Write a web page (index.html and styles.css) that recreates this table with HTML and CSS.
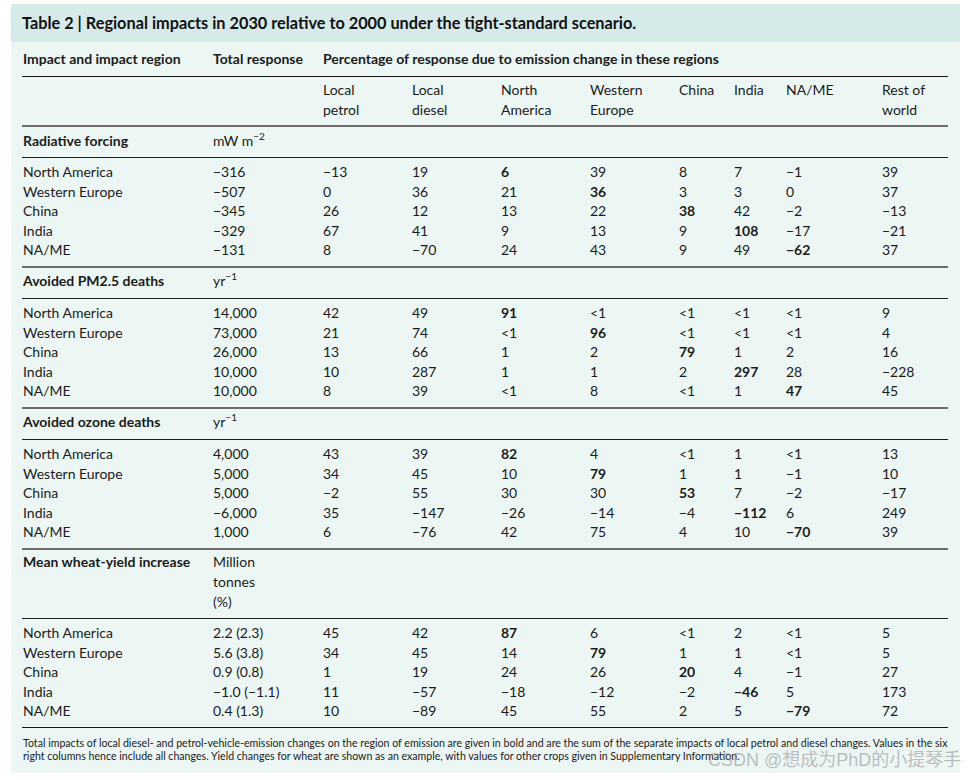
FILE: index.html
```html
<!DOCTYPE html>
<html lang="en">
<head>
<meta charset="utf-8">
<title>Table 2</title>
<link rel="stylesheet" href="styles.css">
</head>
<body>
<div class="panel">
  <div class="title">Table 2 | Regional impacts in 2030 relative to 2000 under the tight-standard scenario.</div>
  <div class="body">
    <table class="tbl">
      <colgroup>
        <col class="c1"><col class="c2"><col class="c3"><col class="c4"><col class="c5"><col class="c6"><col class="c7"><col class="c8"><col class="c9"><col class="c10">
      </colgroup>
      <thead>
        <tr class="hrow1">
          <th>Impact and impact region</th>
          <th>Total response</th>
          <th colspan="8">Percentage of response due to emission change in these regions</th>
        </tr>
        <tr class="hrow2">
          <th></th><th></th>
          <th>Local<br>petrol</th>
          <th>Local<br>diesel</th>
          <th>North<br>America</th>
          <th>Western<br>Europe</th>
          <th>China</th>
          <th>India</th>
          <th>NA/ME</th>
          <th>Rest of<br>world</th>
        </tr>
      </thead>
      <tbody>
        <tr class="sec"><td class="lab">Radiative forcing</td><td>mW m<sup>−2</sup></td><td colspan="8"></td></tr>
        <tr class="first"><td>North America</td><td>−316</td><td>−13</td><td>19</td><td class="b">6</td><td>39</td><td>8</td><td>7</td><td>−1</td><td>39</td></tr>
        <tr><td>Western Europe</td><td>−507</td><td>0</td><td>36</td><td>21</td><td class="b">36</td><td>3</td><td>3</td><td>0</td><td>37</td></tr>
        <tr><td>China</td><td>−345</td><td>26</td><td>12</td><td>13</td><td>22</td><td class="b">38</td><td>42</td><td>−2</td><td>−13</td></tr>
        <tr><td>India</td><td>−329</td><td>67</td><td>41</td><td>9</td><td>13</td><td>9</td><td class="b">108</td><td>−17</td><td>−21</td></tr>
        <tr class="last"><td>NA/ME</td><td>−131</td><td>8</td><td>−70</td><td>24</td><td>43</td><td>9</td><td>49</td><td class="b">−62</td><td>37</td></tr>

        <tr class="sec up"><td class="lab">Avoided PM2.5 deaths</td><td>yr<sup>−1</sup></td><td colspan="8"></td></tr>
        <tr class="first"><td>North America</td><td>14,000</td><td>42</td><td>49</td><td class="b">91</td><td>&lt;1</td><td>&lt;1</td><td>&lt;1</td><td>&lt;1</td><td>9</td></tr>
        <tr><td>Western Europe</td><td>73,000</td><td>21</td><td>74</td><td>&lt;1</td><td class="b">96</td><td>&lt;1</td><td>&lt;1</td><td>&lt;1</td><td>4</td></tr>
        <tr><td>China</td><td>26,000</td><td>13</td><td>66</td><td>1</td><td>2</td><td class="b">79</td><td>1</td><td>2</td><td>16</td></tr>
        <tr><td>India</td><td>10,000</td><td>10</td><td>287</td><td>1</td><td>1</td><td>2</td><td class="b">297</td><td>28</td><td>−228</td></tr>
        <tr class="last"><td>NA/ME</td><td>10,000</td><td>8</td><td>39</td><td>&lt;1</td><td>8</td><td>&lt;1</td><td>1</td><td class="b">47</td><td>45</td></tr>

        <tr class="sec up"><td class="lab">Avoided ozone deaths</td><td>yr<sup>−1</sup></td><td colspan="8"></td></tr>
        <tr class="first"><td>North America</td><td>4,000</td><td>43</td><td>39</td><td class="b">82</td><td>4</td><td>&lt;1</td><td>1</td><td>&lt;1</td><td>13</td></tr>
        <tr><td>Western Europe</td><td>5,000</td><td>34</td><td>45</td><td>10</td><td class="b">79</td><td>1</td><td>1</td><td>−1</td><td>10</td></tr>
        <tr><td>China</td><td>5,000</td><td>−2</td><td>55</td><td>30</td><td>30</td><td class="b">53</td><td>7</td><td>−2</td><td>−17</td></tr>
        <tr><td>India</td><td>−6,000</td><td>35</td><td>−147</td><td>−26</td><td>−14</td><td>−4</td><td class="b">−112</td><td>6</td><td>249</td></tr>
        <tr class="last"><td>NA/ME</td><td>1,000</td><td>6</td><td>−76</td><td>42</td><td>75</td><td>4</td><td>10</td><td class="b">−70</td><td>39</td></tr>

        <tr class="sec tall"><td class="lab">Mean wheat-yield increase</td><td>Million<br>tonnes<br>(%)</td><td colspan="8"></td></tr>
        <tr class="first"><td>North America</td><td>2.2 (2.3)</td><td>45</td><td>42</td><td class="b">87</td><td>6</td><td>&lt;1</td><td>2</td><td>&lt;1</td><td>5</td></tr>
        <tr><td>Western Europe</td><td>5.6 (3.8)</td><td>34</td><td>45</td><td>14</td><td class="b">79</td><td>1</td><td>1</td><td>&lt;1</td><td>5</td></tr>
        <tr><td>China</td><td>0.9 (0.8)</td><td>1</td><td>19</td><td>24</td><td>26</td><td class="b">20</td><td>4</td><td>−1</td><td>27</td></tr>
        <tr><td>India</td><td>−1.0 (−1.1)</td><td>11</td><td>−57</td><td>−18</td><td>−12</td><td>−2</td><td class="b">−46</td><td>5</td><td>173</td></tr>
        <tr class="last end"><td>NA/ME</td><td>0.4 (1.3)</td><td>10</td><td>−89</td><td>45</td><td>55</td><td>2</td><td>5</td><td class="b">−79</td><td>72</td></tr>
      </tbody>
    </table>
    <p class="note">Total impacts of local diesel- and petrol-vehicle-emission changes on the region of emission are given in bold and are the sum of the separate impacts of local petrol and diesel changes. Values in the six right columns hence include all changes. Yield changes for wheat are shown as an example, with values for other crops given in Supplementary Information.</p>
  </div>
</div>
<div class="watermark">CSDN @想成为PhD的小提琴手</div>
</body>
</html>
```

FILE: styles.css
```css
html, body {
  margin: 0;
  padding: 0;
  background: #ffffff;
}
body {
  font-family: Lato, "Open Sans", "Noto Sans", sans-serif;
  color: #1b1b1b;
  position: relative;
  width: 970px;
  height: 780px;
  overflow: hidden;
}
.panel {
  margin: 4px 10px 0 11px;
  width: 949px;
  background: #ecf6f5;
}
.title {
  background: #d7eaea;
  height: 38px;
  line-height: 34px;
  padding-left: 11px;
  font-weight: 700;
  font-size: 16.3px;
  color: #111;
  box-sizing: border-box;
  padding-top: 2px;
}
.body {
  padding: 0 12px 9px 11px;
}
.tbl {
  width: 926px;
  border-collapse: collapse;
  table-layout: fixed;
  font-size: 14px;
}
.c1 { width: 190px; }
.c2 { width: 110px; }
.c3, .c4, .c5, .c6 { width: 89px; }
.c7 { width: 55px; }
.c8 { width: 52px; }
.c9 { width: 96px; }
.c10 { width: 67px; }
.tbl th, .tbl td {
  padding: 0 0 0 1px;
  text-align: left;
  vertical-align: top;
}
.tbl th { font-weight: 400; }
.hrow1 th {
  font-weight: 700;
  height: 34px;
  line-height: 34px;
  vertical-align: middle;
  border-bottom: 1px solid #151515;
}
.hrow2 th {
  line-height: 20px;
  padding-top: 3px;
  padding-bottom: 5px;
  border-bottom: 2px solid #6d6d6d;
}
.tbl tbody tr td { line-height: 19.6px; }
.tbl tbody tr.sec td {
  line-height: 20px;
  padding-top: 4px;
  padding-bottom: 6px;
  border-bottom: 1px solid #1f1f1f;
}
.tbl tbody tr.sec.up td {
  padding-top: 3px;
  padding-bottom: 7px;
}
.tbl tbody tr.sec.tall td {
  padding-top: 2px;
  padding-bottom: 6px;
}
.sec td.lab { font-weight: 700; }
.sec sup {
  font-size: 10px;
  line-height: 0;
  vertical-align: baseline;
  position: relative;
  top: -6px;
}
.tbl tr.first td { padding-top: 4px; }
.tbl tr.last td {
  padding-bottom: 6px;
  border-bottom: 2px solid #6d6d6d;
}
.tbl tr.last.end td {
  border-bottom: 1px solid #151515;
}
.tbl td.b { font-weight: 700; }
.note {
  margin: 0;
  padding: 9px 0 0 1px;
  font-size: 10.6px;
  line-height: 13.5px;
  color: #1b1b1b;
}
.watermark {
  position: absolute;
  left: 708px;
  top: 745px;
  font-family: "Liberation Sans", "Noto Sans CJK SC", sans-serif;
  font-size: 18px;
  color: rgba(140, 140, 140, 0.55);
  white-space: nowrap;
}
```
